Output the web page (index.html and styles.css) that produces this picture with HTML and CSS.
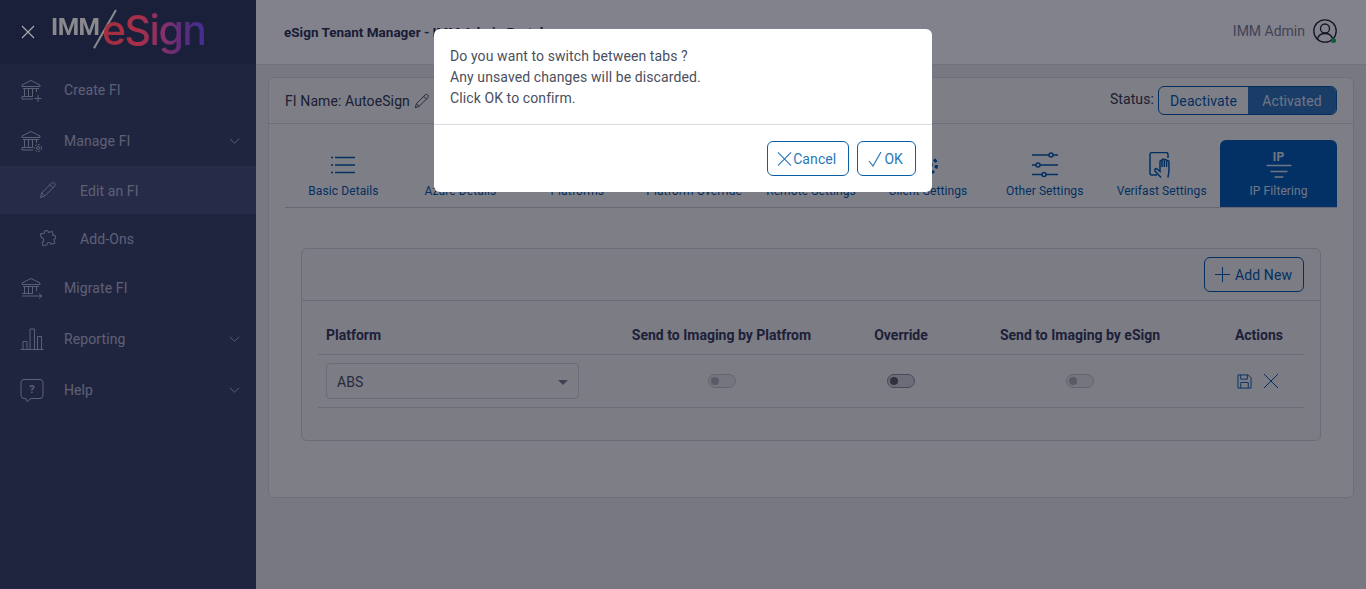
FILE: index.html
```html
<!DOCTYPE html>
<html lang="en">
<head>
    <meta charset="UTF-8">
    <title>eSign Tenant Manager - IMM Admin Portal</title>
    <link rel="stylesheet" href="styles.css">
</head>
<body>

    <!-- Sidebar -->
    <aside class="sidebar">
        <div class="brand">
            <svg class="brand-close" width="16" height="16" viewBox="0 0 16 16"><path d="M2 2l12 12M14 2L2 14"/></svg>
            <div class="logo">
                <span class="logo-imm">IMM</span>
                <span class="logo-slash"></span>
                <span class="logo-esign">eSign</span>
            </div>
        </div>
        <nav>
            <a class="nav-item">
                <svg class="nav-icon" viewBox="0 0 24 24"><path d="M2 7l9-4.500L20 7v1.500H2zM3 10.500h16M4.500 11v7M8.500 11v7M12.500 11v7M16.500 11v3M2 18.500h11M2 18.500v2.500h11M18 17v7M14.500 20.500h7"/></svg>
                <span>Create FI</span>
            </a>
            <a class="nav-item">
                <svg class="nav-icon" viewBox="0 0 24 24"><path d="M2 7l9-4.500L20 7v1.500H2zM3 10.500h16M4.500 11v7M8.500 11v7M12.500 11v7M16.500 11v3M2 18.500h11M2 18.500v2.500h11"/><circle cx="18" cy="19" r="1.500"/><circle cx="18" cy="19" r="3.500" stroke-dasharray="2 1.200"/></svg>
                <span>Manage FI</span>
                <svg class="nav-caret" viewBox="0 0 12 8"><path d="M1 1.500l5 5 5-5"/></svg>
            </a>
            <a class="nav-sub active">
                <svg class="sub-icon" viewBox="0 0 18 18"><path d="M1.500 16.500l1.200-4.500L12.500 2.200c1-.9 2.200-.8 3 0s.9 2 0 3L5.800 15z M2.700 12l3.100 3M11 3.700l3.300 3.300"/></svg>
                <span>Edit an FI</span>
            </a>
            <a class="nav-sub">
                <svg class="sub-icon" viewBox="0 0 18 18"><path d="M6.500 3.500c0-3 4-3 4 0h4v4c3 0 3 4 0 4v4h-4c0-2.500-4-2.500-4 0h-4v-3.500c2.500 0 2.500-4.500 0-4.500v-4z" transform="rotate(-12 9 9)"/></svg>
                <span>Add-Ons</span>
            </a>
            <a class="nav-item">
                <svg class="nav-icon" viewBox="0 0 24 24"><path d="M2 7l9-4.500L20 7v1.500H2zM3 10.500h16M4.500 11v6M8.500 11v6M12.500 11v6M16.500 11v4M2 17.500h11M2 20h20M19 17.500l3 2.500-3 2.500"/></svg>
                <span>Migrate FI</span>
            </a>
            <a class="nav-item">
                <svg class="nav-icon" viewBox="0 0 24 24"><path d="M3 22V14.500h4V22M10 22V2h4.500v20M17.500 22V9.500h4V22M.5 22.500h23"/></svg>
                <span>Reporting</span>
                <svg class="nav-caret" viewBox="0 0 12 8"><path d="M1 1.500l5 5 5-5"/></svg>
            </a>
            <a class="nav-item">
                <svg class="nav-icon" viewBox="0 0 24 24"><path d="M4 1.500h16a3 3 0 0 1 3 3v13a3 3 0 0 1-3 3h-9l-4 3-1-3H4a3 3 0 0 1-3-3v-13a3 3 0 0 1 3-3z"/><text class="help-mark" x="12" y="14.500">?</text></svg>
                <span>Help</span>
                <svg class="nav-caret" viewBox="0 0 12 8"><path d="M1 1.500l5 5 5-5"/></svg>
            </a>
        </nav>
    </aside>

    <div class="main">
        <header class="topbar">
            <h1>eSign Tenant Manager - IMM Admin Portal</h1>
            <div class="user">
                <span>IMM Admin</span>
                <span class="avatar">
                    <svg width="24" height="24" viewBox="0 0 24 24"><circle cx="12" cy="12" r="11.200"/><circle cx="12" cy="9.500" r="4.500"/><path d="M4.500 20c1-4 4-5.500 7.500-5.500s6.500 1.500 7.500 5.500"/></svg>
                    <i class="online"></i>
                </span>
            </div>
        </header>

        <section class="card">
            <div class="card-head">
                <div class="fi-name">
                    FI Name: AutoeSign
                    <svg width="16" height="16" viewBox="0 0 18 18"><path d="M1.500 16.500l1.200-4.500L12.500 2.200c1-.9 2.200-.8 3 0s.9 2 0 3L5.800 15z M2.700 12l3.100 3M11 3.700l3.300 3.300"/></svg>
                </div>
                <div class="status">
                    <span class="status-label">Status:</span>
                    <div class="status-group">
                        <button class="status-btn">Deactivate</button>
                        <button class="status-btn on">Activated</button>
                    </div>
                </div>
            </div>

            <div class="tabs">
                <div class="tab">
                    <svg viewBox="0 0 26 26"><path d="M5 5.500h20M5 13h20M5 20.500h20M1 5.500h2M1 13h2M1 20.500h2"/></svg>
                    <span>Basic Details</span>
                </div>
                <div class="tab">
                    <svg viewBox="0 0 26 26"><path d="M3 22L12 3l4 8-5 8h12z"/></svg>
                    <span>Azure Details</span>
                </div>
                <div class="tab">
                    <svg viewBox="0 0 26 26"><rect x="2" y="4" width="22" height="14" rx="1"/><path d="M8 23h10M13 18v5"/></svg>
                    <span>Platforms</span>
                </div>
                <div class="tab">
                    <svg viewBox="0 0 26 26"><rect x="2" y="4" width="22" height="14" rx="1"/><path d="M8 23h10M13 18v5"/></svg>
                    <span>Platform Override</span>
                </div>
                <div class="tab">
                    <svg viewBox="0 0 26 26"><circle cx="13" cy="13" r="10"/><path d="M13 7v6l4 3"/></svg>
                    <span>Remote Settings</span>
                </div>
                <div class="tab">
                    <svg viewBox="0 0 26 26"><circle cx="13" cy="13" r="4"/><circle cx="13" cy="13" r="8.500" stroke-width="3" stroke-dasharray="3.500 3.170"/></svg>
                    <span>Client Settings</span>
                </div>
                <div class="tab">
                    <svg viewBox="0 0 26 26"><path d="M0 3h17M21 3h5M0 13h4M8 13h18M0 22.500h10M14 22.500h12"/><circle cx="19" cy="3" r="2"/><circle cx="6" cy="13" r="2"/><circle cx="12" cy="22.500" r="2"/></svg>
                    <span>Other Settings</span>
                </div>
                <div class="tab">
                    <svg viewBox="0 0 26 26"><path d="M8 23H3a2 2 0 0 1-2-2V2.500a2 2 0 0 1 2-2h14a2 2 0 0 1 2 2V6"/><path d="M12 25.500l-6-6.500c-1-1.500.8-3 2-2l3 2.500V9.500c0-1.500 2-1.500 2 0V8c0-1.500 2.300-1.500 2.300 0v.5c0-1.500 2.300-1.500 2.300 0v1c0-1.300 2.300-1.300 2.300 0V19c0 2-.5 4-1 6.500M13 9.500V15M15.300 8.500V15M17.600 9.500V15"/></svg>
                    <span>Verifast Settings</span>
                </div>
                <div class="tab active">
                    <b class="ip-mark">IP</b>
                    <svg class="ip-lines" viewBox="0 0 26 14"><path d="M.5 1.500h25M4.500 7.500h17M8.500 13h9"/></svg>
                    <span>IP Filtering</span>
                </div>
            </div>

            <div class="panel">
                <div class="panel-head">
                    <button class="add-btn">
                        <svg width="15" height="15" viewBox="0 0 15 15"><path d="M7.500 0v15M0 7.500h15"/></svg>
                        Add New
                    </button>
                </div>
                <div class="panel-body">
                    <div class="grid-row grid-head">
                        <div class="cell-left">Platform</div>
                        <div>Send to Imaging by Platfrom</div>
                        <div>Override</div>
                        <div>Send to Imaging by eSign</div>
                        <div class="cell-actions">Actions</div>
                    </div>
                    <div class="grid-row grid-data">
                        <div class="cell-left">
                            <div class="select">ABS<i class="select-arrow"></i></div>
                        </div>
                        <div><span class="switch disabled"></span></div>
                        <div><span class="switch"></span></div>
                        <div><span class="switch disabled"></span></div>
                        <div class="cell-actions icons">
                            <svg width="15" height="15" viewBox="0 0 16 16"><path d="M1 1h11l3 3v11H1zM4 1v4.500h7V1M4 15V9h8v6"/></svg>
                            <svg width="16" height="16" viewBox="0 0 16 16"><path d="M1 1l14 14M15 1L1 15"/></svg>
                        </div>
                    </div>
                </div>
            </div>
        </section>
    </div>

    <!-- Confirm dialog -->
    <div class="overlay"></div>
    <div class="modal">
        <div class="modal-body">
            Do you want to switch between tabs ?<br>
            Any unsaved changes will be discarded.<br>
            Click OK to confirm.
        </div>
        <div class="modal-foot">
            <button class="btn-outline btn-cancel">
                <svg width="15" height="16" viewBox="0 0 16 16"><path d="M1 1l14 14M15 1L1 15"/></svg>
                Cancel
            </button>
            <button class="btn-outline btn-ok">
                <svg width="14" height="16" viewBox="0 0 14 16"><path d="M1 10l4 5L13 1"/></svg>
                OK
            </button>
        </div>
    </div>

</body>
</html>
```

FILE: styles.css
```css
* {
    margin: 0;
    padding: 0;
    box-sizing: border-box;
}
html, body {
    height: 100%;
    overflow: hidden;
}
body {
    font-family: 'Roboto', sans-serif;
    font-size: 14px;
    letter-spacing: .1px;
    background: #ebebea;
    color: #33384a;
    display: flex;
}
svg {
    fill: none;
    stroke: currentColor;
    stroke-width: 1;
}
button {
    font-family: inherit;
    font-size: 14px;
    letter-spacing: .1px;
    background: none;
    cursor: pointer;
}

/* sidebar */
.sidebar {
    width: 256px;
    flex-shrink: 0;
    background: #3b4565;
    color: #b4bbd0;
}
.brand {
    height: 64px;
    background: #2f3a5b;
    display: flex;
    align-items: center;
    padding-left: 20px;
}
/* logo and close stay bright above the dimmed page */
.brand-close {
    position: relative;
    z-index: 2;
    color: #a8a8ac;
    stroke-width: 1.200;
}
.logo {
    position: relative;
    z-index: 2;
    width: 160px;
    height: 64px;
    margin-left: 15px;
}
.logo-imm {
    position: absolute;
    left: 0;
    top: 12px;
    font-size: 24.500px;
    font-weight: 700;
    letter-spacing: -0.5px;
    color: #8a8a8e;
}
.logo-slash {
    position: absolute;
    left: 53px;
    top: 7px;
    width: 1.500px;
    height: 44px;
    background: #8a8a8e;
    transform: rotate(30deg);
}
.logo-esign {
    position: absolute;
    left: 51px;
    top: 5px;
    font-family: 'Inter', sans-serif;
    font-size: 41px;
    font-weight: 500;
    letter-spacing: -1.500px;
    background: linear-gradient(90deg, #a22e3e 0%, #a82f48 35%, #85306c 60%, #5a2c7c 78%, #422e92 100%);
    -webkit-background-clip: text;
    background-clip: text;
    color: transparent;
}
.nav-item, .nav-sub {
    display: flex;
    align-items: center;
    position: relative;
}
.nav-item {
    height: 51px;
    padding-left: 64px;
}
.nav-sub {
    height: 48px;
    padding: 1px 0 0 80px;
}
.nav-sub.active {
    background: #475175;
}
.nav-icon {
    position: absolute;
    left: 20px;
    top: 14px;
    width: 24px;
    height: 24px;
}
.sub-icon {
    position: absolute;
    left: 39px;
    top: 15px;
    width: 18px;
    height: 18px;
}
.nav-caret {
    position: absolute;
    right: 16px;
    top: 22px;
    width: 11px;
    height: 8px;
}
.help-mark {
    font-size: 11px;
    font-weight: 700;
    text-anchor: middle;
    fill: currentColor;
    stroke: none;
}

/* top bar */
.main {
    flex: 1;
    min-width: 0;
}
.topbar {
    height: 65px;
    background: #fff;
    border-bottom: 1px solid #dcdce4;
    display: flex;
    justify-content: space-between;
    align-items: center;
    padding: 0 29px 0 28px;
}
h1 {
    font-size: 13.500px;
    font-weight: 700;
    letter-spacing: 0;
    color: #2d3350;
}
.user {
    display: flex;
    align-items: center;
    gap: 8px;
    margin-top: -2px;
    letter-spacing: 0;
    color: #7a7f90;
}
.avatar {
    position: relative;
    display: block;
    height: 24px;
    color: #1e2230;
}
.avatar svg {
    stroke-width: 1.300;
}
.online {
    position: absolute;
    right: 1px;
    bottom: 0;
    width: 5px;
    height: 5px;
    border-radius: 50%;
    background: #1fae5a;
}

/* main card */
.card {
    margin: 12px 12px 0;
    height: 421px;
    background: #f6f6f4;
    border: 1px solid #d8d8de;
    border-radius: 6px;
}
.card-head {
    height: 46px;
    border-bottom: 1px solid #d8d8de;
    display: flex;
    justify-content: space-between;
    align-items: center;
    padding: 0 16px;
}
.fi-name {
    display: flex;
    align-items: center;
    gap: 4px;
}
.status {
    display: flex;
    align-items: center;
    gap: 4px;
}
.status-label {
    margin-top: -4px;
}
.status-group {
    display: flex;
    height: 29px;
    border: 1px solid #005aa8;
    border-radius: 6px;
    overflow: hidden;
}
.status-btn {
    border: none;
    color: #005aa8;
    width: 89px;
}
.status-btn.on {
    width: 88px;
    background: #2f74b4;
    color: #d8e4f0;
}

/* tabs */
.tabs {
    display: flex;
    margin: 16px 16px 0;
    height: 68px;
    border-bottom: 1px solid #c8c8d2;
}
.tab {
    flex: 1;
    display: flex;
    flex-direction: column;
    align-items: center;
    font-size: 12px;
    color: #005aa8;
    padding-top: 12px;
    border-radius: 6px 6px 0 0;
}
.tab svg {
    width: 26px;
    height: 26px;
    stroke-width: 1.500;
    margin-bottom: 6px;
    flex-shrink: 0;
}
.tab.active {
    background: #005cb0;
    color: #dce6f2;
    padding-top: 10px;
}
.ip-mark {
    font-size: 12px;
    line-height: 14px;
}
.tab .ip-lines {
    width: 26px;
    height: 14px;
    margin: 0 0 6px;
}

/* inner panel */
.panel {
    margin: 40px 32px 0;
    height: 193px;
    background: #f3f3f1;
    border: 1px solid #d0d0d8;
    border-radius: 6px;
}
.panel-head {
    height: 52px;
    border-bottom: 1px solid #d0d0d8;
    display: flex;
    justify-content: flex-end;
    align-items: flex-start;
    padding: 8px 16px;
}
.add-btn {
    display: flex;
    align-items: center;
    gap: 5px;
    width: 100px;
    height: 35px;
    padding-left: 10px;
    border: 1px solid #005aa8;
    border-radius: 6px;
    color: #005aa8;
}
.panel-body {
    padding: 0 16px;
}
.grid-row {
    display: grid;
    grid-template-columns: 306px 195px 164px 194px 127px;
    align-items: center;
    text-align: center;
    border-bottom: 1px solid #d0d0d8;
}
.grid-head {
    height: 54px;
    padding-top: 15px;
    font-weight: 700;
    letter-spacing: 0;
    color: #353a56;
}
.grid-data {
    height: 53px;
}
.cell-left {
    text-align: left;
    padding-left: 8px;
}
.cell-actions {
    text-align: right;
    padding-right: 21px;
}
.icons {
    display: flex;
    justify-content: flex-end;
    align-items: center;
    gap: 11px;
    color: #005aa8;
    padding-right: 25px;
}
.select {
    position: relative;
    width: 253px;
    height: 36px;
    line-height: 37px;
    padding-left: 10px;
    border: 1px solid #d0d0d8;
    border-radius: 4px;
    color: #4a4e60;
}
.select-arrow {
    position: absolute;
    right: 10px;
    top: 16px;
    border-left: 5px solid transparent;
    border-right: 5px solid transparent;
    border-top: 5px solid #7a7e8c;
}
.switch {
    position: relative;
    display: block;
    width: 28px;
    height: 14px;
    margin: 0 auto;
    border: 1px solid #8c8c96;
    border-radius: 7px;
    background: #d4d4da;
}
.switch::before {
    content: "";
    position: absolute;
    left: 2px;
    top: 2px;
    width: 8px;
    height: 8px;
    border-radius: 50%;
    background: #5c5c68;
}
.switch.disabled {
    opacity: .45;
}

/* dialog */
.overlay {
    position: fixed;
    inset: 0;
    z-index: 1;
    background: rgba(5, 5, 25, .5);
}
.modal {
    position: fixed;
    z-index: 3;
    left: 434px;
    top: 29px;
    width: 498px;
    background: #fff;
    border-radius: 6px;
    color: #4a4f5e;
}
.modal-body {
    padding: 17px 16px 0;
    height: 96px;
    line-height: 21px;
    border-bottom: 1px solid #dcdcdf;
}
.modal-foot {
    height: 67px;
    display: flex;
    justify-content: flex-end;
    gap: 8px;
    padding: 16px;
}
.btn-outline {
    display: flex;
    align-items: center;
    height: 35px;
    border: 1px solid #0c5fa6;
    border-radius: 6px;
    color: #2a78b8;
}
.btn-outline svg {
    stroke-width: 1.200;
}
.btn-cancel {
    gap: 1px;
    padding: 0 12px 0 9px;
}
.btn-ok {
    gap: 2px;
    padding: 0 12px 0 10px;
}
```
